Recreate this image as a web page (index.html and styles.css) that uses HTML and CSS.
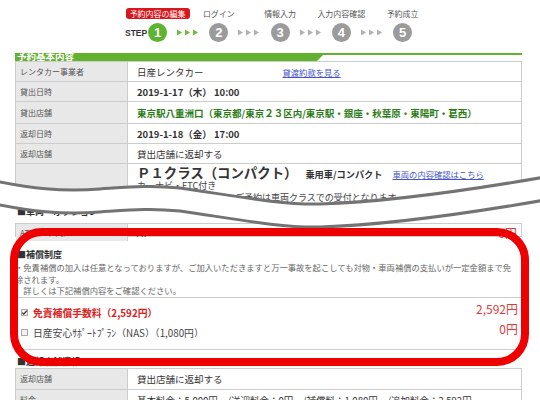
FILE: index.html
```html
<!DOCTYPE html>
<html lang="ja">
<head>
<meta charset="utf-8">
<title>予約内容の編集</title>
<link rel="stylesheet" href="styles.css">
</head>
<body>
<div class="steps">
  <div class="step-labels">
    <span class="lbl"><span class="badge">予約内容の編集</span></span>
    <span class="lbl">ログイン</span>
    <span class="lbl">情報入力</span>
    <span class="lbl">入力内容確認</span>
    <span class="lbl">予約成立</span>
  </div>
  <div class="step-row">
    <span class="step-word">STEP</span>
    <span class="num on">1</span>
    <span class="arrows on"><svg width="21" height="7" viewBox="0 0 21 7"><polygon points="0,0.5 5,3.5 0,6.5"/><polygon points="8,0.5 13,3.5 8,6.5"/><polygon points="16,0.5 21,3.5 16,6.5"/></svg></span>
    <span class="num">2</span>
    <span class="arrows"><svg width="21" height="7" viewBox="0 0 21 7"><polygon points="0,0.5 5,3.5 0,6.5"/><polygon points="8,0.5 13,3.5 8,6.5"/><polygon points="16,0.5 21,3.5 16,6.5"/></svg></span>
    <span class="num">3</span>
    <span class="arrows"><svg width="21" height="7" viewBox="0 0 21 7"><polygon points="0,0.5 5,3.5 0,6.5"/><polygon points="8,0.5 13,3.5 8,6.5"/><polygon points="16,0.5 21,3.5 16,6.5"/></svg></span>
    <span class="num">4</span>
    <span class="arrows"><svg width="21" height="7" viewBox="0 0 21 7"><polygon points="0,0.5 5,3.5 0,6.5"/><polygon points="8,0.5 13,3.5 8,6.5"/><polygon points="16,0.5 21,3.5 16,6.5"/></svg></span>
    <span class="num">5</span>
  </div>
</div>

<div class="main">
  <div class="sec-head"><div class="tab"><span>予約基本内容</span></div></div>
  <div class="info">
    <div class="row r19"><div class="k">レンタカー事業者</div><div class="v">日産レンタカー<a class="link terms">貸渡約款を見る</a></div></div>
    <div class="row r19"><div class="k">貸出日時</div><div class="v b">2019-1-17（木） 10:00</div></div>
    <div class="row r21"><div class="k">貸出店舗</div><div class="v b green">東京駅八重洲口（東京都/東京２３区内/東京駅・銀座・秋葉原・東陽町・葛西）</div></div>
    <div class="row r19"><div class="k">返却日時</div><div class="v b">2019-1-18（金） 17:00</div></div>
    <div class="row r19"><div class="k">返却店舗</div><div class="v">貸出店舗に返却する</div></div>
    <div class="row"><div class="k"></div>
      <div class="v car">
        <div class="car-title"><span class="cls">Ｐ１クラス（コンパクト）</span><span class="type">乗用車/コンパクト</span><a class="link">車両の内容確認はこちら</a></div>
        <div class="car-line">カーナビ・ETC付き</div>
        <div class="car-line">※写真はイメージです。ご予約は車両クラスでの受付となります。</div>
      </div>
    </div>
  </div>

  <div class="h3 car-h">■車両・オプション</div>
  <div class="info">
    <div class="row r12"><div class="k">AT/MT（0円）</div><div class="v at">AT<span class="amt-s">0円</span></div></div>
  </div>

  <div class="h3 ins-h">■補償制度</div>
  <p class="desc">・免責補償の加入は任意となっておりますが、ご加入いただきますと万一事故を起こしても対物・車両補償の支払いが一定金額まで免<br>除されます。<br>　詳しくは下記補償内容をご確認ください。</p>
  <div class="opts">
    <div class="opt">
      <span class="cb"><svg width="7" height="7" viewBox="0 0 7 7"><path d="M1.3 3.6 L2.8 5.1 L5.8 1.8" fill="none" stroke="#333" stroke-width="1.3"/></svg></span>
      <span class="opt-name on">免責補償手数料（2,592円）</span>
      <span class="amt">2,592円</span>
    </div>
    <div class="opt">
      <span class="cb"></span>
      <span class="opt-name">日産安心ｻﾎﾟｰﾄﾌﾟﾗﾝ（NAS）（1,080円）</span>
      <span class="amt">0円</span>
    </div>
  </div>

  <div class="h3 ret-h">■返却店舗情報</div>
  <div class="info">
    <div class="row r20"><div class="k">返却店舗</div><div class="v">貸出店舗に返却する</div></div>
    <div class="row r20"><div class="k">料金</div><div class="v">基本料金：5,000円　/送迎料金：0円　/補償料：1,080円　/追加料金：2,592円</div></div>
  </div>
</div>

<svg class="wave" width="540" height="400" viewBox="0 0 540 400">
  <path fill="#fff" d="M-5,181 C30,188 60,192 100,189 C130,187 150,185 180,188 C230,195 280,205 320,204 C390,202 470,190 545,177 L545,200 C470,213 390,225 320,227 C280,228 230,218 180,211 C150,208 130,210 100,212 C60,215 30,211 -5,204 Z"/>
  <path fill="none" stroke="#737373" stroke-width="3" d="M-5,181 C30,188 60,192 100,189 C130,187 150,185 180,188 C230,195 280,205 320,204 C390,202 470,190 545,177"/>
  <path fill="none" stroke="#737373" stroke-width="3" d="M-5,204 C30,211 60,215 100,212 C130,210 150,208 180,211 C230,218 280,228 320,227 C390,225 470,213 545,200"/>
</svg>
<div class="redbox"></div>
</body>
</html>
```

FILE: styles.css
```css
html, body {
  margin: 0;
  padding: 0;
}
body {
  width: 540px;
  height: 400px;
  overflow: hidden;
  position: relative;
  background: #fff;
  color: #333;
  font-family: "Noto Sans CJK JP", "Noto Sans", sans-serif;
}

/* step bar */
.steps {
  height: 42px;
}
.step-labels {
  display: flex;
  padding: 8px 0 0 127px;
  height: 12px;
}
.lbl {
  width: 61.25px;
  flex: none;
  text-align: center;
  font-size: 8px;
  line-height: 12px;
  color: #555;
  white-space: nowrap;
}
.badge {
  display: inline-block;
  margin: 0 -3px;
  padding: 0 4px;
  background: #d8161d;
  color: #fff;
  border-radius: 3px;
  line-height: 11px;
  font-size: 8px;
}
.step-row {
  display: flex;
  align-items: center;
  padding-left: 125px;
  margin-top: 3px;
  height: 19px;
}
.step-word {
  width: 23px;
  font: bold 8.5px "Liberation Sans", Arial, sans-serif;
  color: #333;
}
.num {
  flex: none;
  width: 19px;
  height: 19px;
  border-radius: 50%;
  background: #9b9b9b;
  color: #fff;
  font: bold 13px/19px "Liberation Sans", Arial, sans-serif;
  text-align: center;
}
.num.on {
  background: #5cb431;
}
.arrows {
  flex: none;
  width: 42.25px;
  box-sizing: border-box;
  padding-left: 10px;
  display: flex;
  align-items: center;
}
.arrows svg {
  fill: #b0b0b0;
}
.arrows.on svg {
  fill: #6cbb38;
}

/* main */
.main {
  padding-left: 15px;
  width: 507px;
}
.sec-head {
  margin-top: 11px;
  height: 8px;
  background: linear-gradient(#63b22f, #63b22f) top left / 100% 2px no-repeat;
}
.tab {
  width: 310px;
  height: 8px;
  background: #63b22f;
  clip-path: polygon(0 0, 100% 0, calc(100% - 8px) 100%, 0 100%);
  overflow: hidden;
  display: flex;
  align-items: flex-end;
  padding-left: 2px;
  box-sizing: border-box;
}
.tab span {
  color: #fff;
  font-weight: bold;
  font-size: 9.5px;
  line-height: 10px;
  white-space: nowrap;
}

.info {
  border: 1px solid #ccc;
  border-bottom: none;
}
.row {
  display: grid;
  grid-template-columns: 112px 1fr;
  border-bottom: 1px solid #ccc;
}
.r19 { height: 19px; }
.r20 { height: 20px; }
.r21 { height: 21px; }
.r12 { height: 12px; }
.k {
  background: #e8e8e8;
  border-right: 1px solid #ccc;
  font-size: 8px;
  color: #555;
  padding-left: 4px;
  display: flex;
  align-items: center;
  white-space: nowrap;
}
.v {
  font-size: 9.5px;
  color: #333;
  padding-left: 9px;
  display: flex;
  align-items: center;
  white-space: nowrap;
  overflow: hidden;
}
.v.b {
  font-weight: bold;
}
.v.green {
  color: #2a7c16;
}
.link {
  color: #4455cc;
  text-decoration: underline;
  font-size: 8.3px;
  font-weight: normal;
}
.terms {
  margin-left: 79px;
}
.v.car {
  display: block;
  height: 40px;
}
.car-title {
  height: 16px;
  display: flex;
  align-items: baseline;
  line-height: 16px;
}
.cls {
  font-size: 13.4px;
  font-weight: bold;
  color: #333;
}
.type {
  font-size: 9.2px;
  font-weight: bold;
  margin-left: 8px;
}
.car-title .link {
  margin-left: 10px;
}
.car-line {
  font-size: 9px;
  line-height: 12px;
  color: #444;
}

.h3 {
  font-size: 9px;
  font-weight: bold;
  color: #333;
  white-space: nowrap;
}
.car-h {
  height: 18px;
  line-height: 14px;
  padding-left: 2px;
}
.v.at {
  justify-content: space-between;
  padding-right: 4px;
  overflow: visible;
}
.amt-s {
  font-size: 12px;
  color: #e03a3a;
}
.ins-h {
  margin-top: 12px;
  line-height: 12px;
  padding-left: 2px;
}
.desc {
  margin: 0;
  padding-top: 1px;
  font-size: 8.3px;
  line-height: 11.5px;
  color: #666;
  white-space: nowrap;
  border-bottom: 1px solid #ccc;
}
.opts {
  padding: 5px 0 6px;
  border-bottom: 1px solid #ccc;
}
.opt {
  display: flex;
  align-items: center;
  height: 20px;
  padding-left: 6px;
}
.cb {
  flex: none;
  width: 7px;
  height: 7px;
  box-sizing: border-box;
  border: 1px solid #aaa;
  background: #f2f2f2;
  margin-right: 5px;
  display: flex;
}
.cb svg {
  margin: -1px;
}
.opt-name {
  flex: 1;
  font-size: 9.8px;
  color: #444;
  white-space: nowrap;
}
.opt-name.on {
  color: #dc2020;
  font-weight: bold;
}
.amt {
  align-self: flex-start;
  font-size: 12px;
  line-height: 12px;
  color: #e03a3a;
  margin-right: 4px;
}
.ret-h {
  margin-top: 6px;
  line-height: 12px;
  height: 12px;
  padding-left: 2px;
}

/* overlays */
.wave {
  position: absolute;
  left: 0;
  top: 0;
}
.redbox {
  position: absolute;
  left: 10px;
  top: 228px;
  width: 519px;
  height: 138px;
  box-sizing: border-box;
  border: 8px solid #ee0000;
  border-radius: 32px;
}
```
